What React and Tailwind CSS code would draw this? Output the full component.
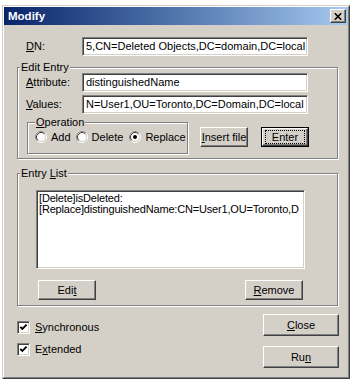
const FACE = "bg-[#d4d0c8]";

function Sunken({ className = "", children }) {
  return (
    <div
      className={`border border-t-[#808080] border-l-[#808080] border-r-white border-b-white shadow-[inset_1px_1px_0_#404040,inset_-1px_-1px_0_#d4d0c8] bg-white overflow-hidden whitespace-nowrap ${className}`}
    >
      {children}
    </div>
  );
}

function Field({ children }) {
  return (
    <Sunken className="w-[226px] h-[19px] flex items-center pl-[3px]">
      <span className="leading-[13px]">{children}</span>
    </Sunken>
  );
}

function Btn({ className = "", children, isDefault }) {
  const face = (
    <div className="h-full w-full flex items-center justify-center border border-t-white border-l-white border-r-[#404040] border-b-[#404040] shadow-[inset_-1px_-1px_0_#808080] bg-[#d4d0c8]">
      {isDefault ? (
        <div className="flex items-center justify-center w-[calc(100%-4px)] h-[calc(100%-2px)] border border-dotted border-black leading-[12px]">
          {children}
        </div>
      ) : (
        children
      )}
    </div>
  );
  if (isDefault) {
    return <div className={`border border-black ${className}`}>{face}</div>;
  }
  return <div className={className}>{face}</div>;
}

function GroupBox({ caption, captionLeft = "left-[2px]", className = "", children }) {
  return (
    <div
      className={`relative border border-[#808080] shadow-[inset_1px_1px_0_#fff,1px_1px_0_#fff] ${className}`}
    >
      <span className={`absolute top-[-8px] ${captionLeft} px-[1px] leading-[14px] ${FACE}`}>
        {caption}
      </span>
      {children}
    </div>
  );
}

function Radio({ checked }) {
  return (
    <svg width="12" height="12" viewBox="0 0 12 12" className="shrink-0">
      <circle cx="6" cy="6" r="5.5" fill="none" stroke="#ffffff" />
      <path d="M2.11 9.89 A5.5 5.5 0 0 1 9.89 2.11" fill="none" stroke="#808080" />
      <circle cx="6" cy="6" r="4.5" fill="#ffffff" stroke="#d4d0c8" />
      <path d="M2.82 9.18 A4.5 4.5 0 0 1 9.18 2.82" fill="none" stroke="#404040" />
      {checked && <circle cx="6" cy="6" r="2" fill="#000000" />}
    </svg>
  );
}

function Check({ label }) {
  return (
    <div className="flex items-center h-[13px]">
      <div className="w-[13px] h-[13px] border border-t-[#808080] border-l-[#808080] border-r-white border-b-white shadow-[inset_1px_1px_0_#404040,inset_-1px_-1px_0_#d4d0c8] bg-white flex items-center justify-center">
        <svg width="9" height="9" viewBox="0 0 9 9">
          <polyline points="1.3,3.8 3.4,5.9 7.6,1.7" fill="none" stroke="#000" strokeWidth="1.9" />
        </svg>
      </div>
      <span className="ml-[5px] leading-[13px]">{label}</span>
    </div>
  );
}

export default function App() {
  return (
    <div className="w-[354px] h-[389px] bg-white pt-[5px] pl-[2px] font-['Liberation_Sans',Arial,sans-serif] text-[11px] text-black">
      <div className="w-[348px] h-[374px] border border-t-[#d4d0c8] border-l-[#d4d0c8] border-r-[#404040] border-b-[#404040] bg-[#d4d0c8]">
        <div className="h-full border border-t-white border-l-white border-r-[#808080] border-b-[#808080] flex flex-col">
          {/* title bar */}
          <div className="h-[18px] flex items-center justify-between pl-[4px] pr-[2px] bg-linear-to-r from-[#0a246a] to-[#a6caf0]">
            <span className="text-white font-bold text-[11.5px] leading-[14px]">Modify</span>
            <div className="w-[16px] h-[14px] border border-t-white border-l-white border-r-[#404040] border-b-[#404040] shadow-[inset_-1px_-1px_0_#808080] bg-[#d4d0c8] flex items-center justify-center">
              <svg width="8" height="7" viewBox="0 0 8 7">
                <path d="M0.8 0.3 L7.2 6.7 M7.2 0.3 L0.8 6.7" stroke="#000" strokeWidth="1.6" />
              </svg>
            </div>
          </div>

          {/* body */}
          <div className="flex flex-col pl-[13px] pt-[12px]">
            <div className="flex items-center">
              <span className="w-[65px] pl-[9px]">
                <u>D</u>N:
              </span>
              <Field>5,CN=Deleted Objects,DC=domain,DC=local</Field>
            </div>

            <GroupBox caption="Edit Entry" className="mt-[11px] w-[321px] pt-[5px] pb-[4px]">
              <div className="flex items-center pl-[8px]">
                <span className="w-[56px]">
                  <u>A</u>ttribute:
                </span>
                <Field>distinguishedName</Field>
              </div>
              <div className="flex items-center pl-[8px] mt-[3px]">
                <span className="w-[56px]">
                  <u>V</u>alues:
                </span>
                <Field>N=User1,OU=Toronto,DC=Domain,DC=local</Field>
              </div>
              <div className="flex items-start pl-[9px] mt-[8px]">
                <GroupBox
                  caption={
                    <>
                      <u>O</u>peration
                    </>
                  }
                  captionLeft="left-[7px]"
                  className="w-[161px] h-[32px] pt-[8px] pl-[7px]"
                >
                  <div className="flex items-center h-[12px]">
                    <Radio />
                    <span className="ml-[4px]">Add</span>
                    <span className="ml-[5px] flex items-center">
                      <Radio />
                    </span>
                    <span className="ml-[4px]">Delete</span>
                    <span className="ml-[6px] flex items-center">
                      <Radio checked />
                    </span>
                    <span className="ml-[4px]">Replace</span>
                  </div>
                </GroupBox>
                <Btn className="ml-[12px] mt-[5px] w-[48px] h-[20px]">
                  <span>
                    <u>I</u>nsert file
                  </span>
                </Btn>
                <Btn isDefault className="ml-[13px] mt-[5px] w-[48px] h-[20px]">
                  <span>Enter</span>
                </Btn>
              </div>
            </GroupBox>

            <GroupBox
              caption={
                <>
                  Entry <u>L</u>ist
                </>
              }
              className="mt-[14px] w-[321px] pt-[16px] pb-[5px]"
            >
              <Sunken className="ml-[18px] w-[269px] h-[79px] pl-[2px] pt-[2px] leading-[11px] tracking-[-0.18px]">
                <div>[Delete]isDeleted:</div>
                <div>[Replace]distinguishedName:CN=User1,OU=Toronto,D</div>
              </Sunken>
              <div className="flex justify-between pl-[20px] pr-[34px] mt-[11px]">
                <Btn className="w-[58px] h-[20px]">
                  <span>
                    Edi<u>t</u>
                  </span>
                </Btn>
                <Btn className="w-[58px] h-[20px]">
                  <span>
                    <u>R</u>emove
                  </span>
                </Btn>
              </div>
            </GroupBox>

            <div className="flex justify-between w-[322px]">
              <div className="flex flex-col gap-[9px] pt-[15px]">
                <Check
                  label={
                    <>
                      <u>S</u>ynchronous
                    </>
                  }
                />
                <Check
                  label={
                    <>
                      E<u>x</u>tended
                    </>
                  }
                />
              </div>
              <div className="flex flex-col pt-[8px]">
                <Btn className="w-[76px] h-[22px]">
                  <span>
                    <u>C</u>lose
                  </span>
                </Btn>
                <Btn className="w-[76px] h-[22px] mt-[10px]">
                  <span>
                    Ru<u>n</u>
                  </span>
                </Btn>
              </div>
            </div>
          </div>
        </div>
      </div>
    </div>
  );
}
